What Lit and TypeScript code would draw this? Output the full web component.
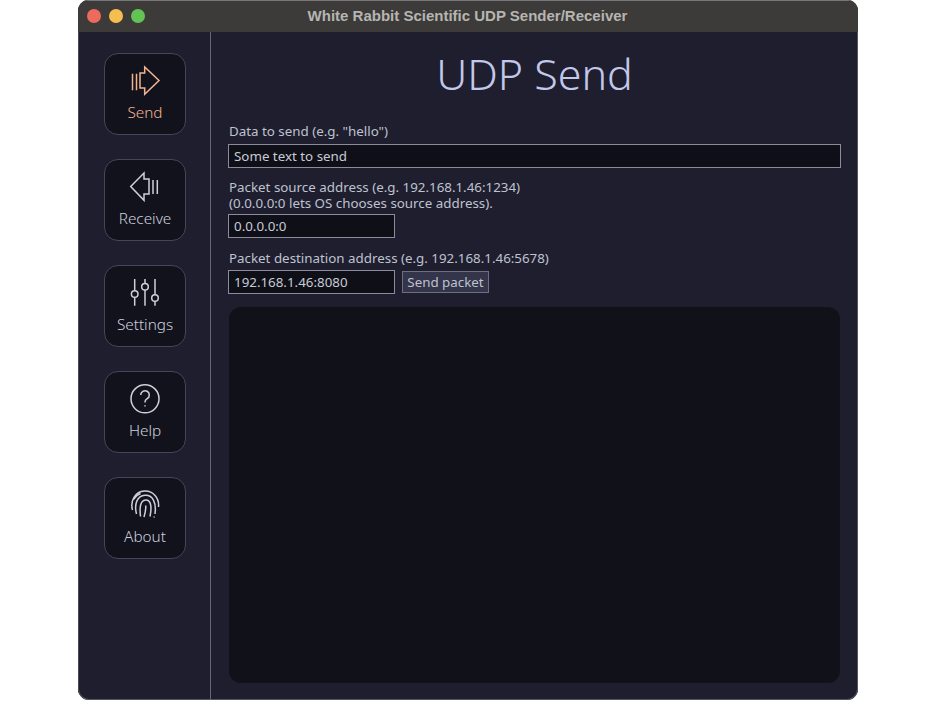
import { LitElement, html, css, svg } from "lit";
import { customElement } from "lit/decorators.js";

const icons: Record<string, unknown> = {
  send: svg`<path d="M5.500 10.700v16.600M9.500 10.700v16.600"/><path d="M13 10h4.700V4L32 17.500 17.700 31.300V25H13z"/>`,
  receive: svg`<path d="M26 11v14M30.300 11v14"/><path d="M22 10h-5V4L3.700 17.500 17 31.300V25h5z"/>`,
  settings: svg`<path d="M7.700 4v11.700M7.700 22.300v8.400M18 4v4.400M18 15v15.700M28 4v15.700M28 26.300v4.400"/><circle cx="7.700" cy="19" r="3.300"/><circle cx="18" cy="11.700" r="3.300"/><circle cx="28" cy="23" r="3.300"/>`,
  help: svg`<circle cx="18" cy="17.800" r="14"/><path d="M13.700 14a4.300 4.300 0 1 1 6.500 3.700c-1.400.9-2.200 1.800-2.200 3.400v.5"/><path d="M18 24.200v1.200"/>`,
  about: svg`<path d="M5.500 23C3 14 8 4.500 17.500 4 26 3.500 32.500 11 31.500 20"/><path d="M9.500 27C7 17 10 8.800 18 8.300 26 7.800 29.500 16 28 27"/><path d="M6.300 12.500C8 9.800 10.500 7.500 13.500 6.500"/><path d="M13.500 29.500C12.500 21 13 13.500 18.500 13 24 12.500 25 20 23 29.500"/><path d="M17 30C18.500 25 19 22 18.700 18.500"/><path d="M27 30.500l.3-1"/>`,
};

const NAV = [
  { id: "send", label: "Send", active: true },
  { id: "receive", label: "Receive" },
  { id: "settings", label: "Settings" },
  { id: "help", label: "Help" },
  { id: "about", label: "About" },
];

@customElement("app-root")
export class AppRoot extends LitElement {
  static styles = css`
    :host {
      display: block;
      width: 934px;
      height: 701px;
      background: #ffffff;
      font-family: "Noto Sans", "Open Sans", sans-serif;
    }
    .page {
      padding-left: 78px;
      width: 780px;
    }
    .window {
      width: 780px;
      height: 700px;
      border-radius: 11px;
      overflow: hidden;
      background: #1e1e2e;
      display: flex;
      flex-direction: column;
      box-shadow: inset 0 0 0 1px #55555f;
    }
    .titlebar {
      height: 32px;
      flex: none;
      background: #3c3b39;
      box-sizing: border-box;
      border-top: 1px solid #77767a;
      display: flex;
      align-items: center;
      padding: 0 0 2px 9px;
    }
    .lights { display: flex; gap: 8px; }
    .light { width: 14px; height: 14px; border-radius: 50%; }
    .red { background: #ed6a5e; }
    .yellow { background: #f5bf4f; }
    .green { background: #61c454; }
    .wintitle {
      flex: 1;
      text-align: center;
      margin-left: -68px;
      font: 700 15px "Liberation Sans", Arial, sans-serif;
      color: #b6b5b2;
    }
    .body { flex: 1; display: flex; min-height: 0; }
    .side {
      width: 130px;
      flex: none;
      border-right: 1px solid #666679;
      border-left: 1px solid #4a4a55;
      padding: 21px 0 0 1px;
      display: flex;
      flex-direction: column;
      align-items: center;
      gap: 24px;
    }
    .navbtn {
      width: 82px;
      height: 82px;
      box-sizing: border-box;
      border: 1px solid #46465a;
      border-radius: 14px;
      background: #12121d;
      display: flex;
      flex-direction: column;
      align-items: center;
      color: #cdd0dc;
      font-size: 15.300px;
      font-weight: 300;
      line-height: 20px;
    }
    .navbtn.active { color: #f2b48e; }
    .navbtn svg {
      margin-top: 9px;
      width: 36px;
      height: 36px;
      fill: none;
      stroke: currentColor;
      stroke-width: 1.500px;
    }
    .navbtn span { margin-top: 3px; }
    .main {
      flex: 1;
      min-width: 0;
      padding: 0 17px 17px 17px;
      display: flex;
      flex-direction: column;
      color: #bfc2cf;
      font-size: 13.350px;
      line-height: 16px;
    }
    h1 {
      margin: 12px 0 0;
      text-align: center;
      font-weight: 300;
      font-size: 43px;
      line-height: 60px;
      color: #c3c8eb;
    }
    label { display: block; margin-left: 1px; }
    .l1 { margin-top: 19px; }
    .l2 { margin-top: 11px; }
    .l3 { margin-top: 12px; }
    .field {
      height: 24px;
      box-sizing: border-box;
      border: 1px solid #8b8b9b;
      background: #0f0f18;
      color: #c8cad5;
      padding: 0 5px;
      line-height: 22px;
      white-space: nowrap;
    }
    .field.first { margin-top: 5px; }
    .field.short { width: 167px; margin-top: 3px; }
    .row { display: flex; align-items: center; gap: 7px; margin-top: 4px; }
    .row .field { margin-top: 0; }
    .btn {
      width: 87px;
      height: 22px;
      box-sizing: border-box;
      border: 1px solid #6e6e82;
      background: #34344a;
      line-height: 20px;
      text-align: center;
    }
    .log {
      flex: 1;
      margin: 13px 1px 0;
      border-radius: 12px;
      background: #11111a;
    }
  `;

  render() {
    return html`<div class="page">
      <div class="window">
        <div class="titlebar">
          <div class="lights">
            <div class="light red"></div>
            <div class="light yellow"></div>
            <div class="light green"></div>
          </div>
          <div class="wintitle">White Rabbit Scientific UDP Sender/Receiver</div>
        </div>
        <div class="body">
          <div class="side">
            ${NAV.map(
              (n) => html`<div class="navbtn ${n.active ? "active" : ""}">
                <svg viewBox="0 0 36 36">${icons[n.id]}</svg>
                <span>${n.label}</span>
              </div>`
            )}
          </div>
          <div class="main">
            <h1>UDP Send</h1>
            <label class="l1">Data to send (e.g. "hello")</label>
            <div class="field first">Some text to send</div>
            <label class="l2">Packet source address (e.g. 192.168.1.46:1234)<br />(0.0.0.0:0 lets OS chooses source address).</label>
            <div class="field short">0.0.0.0:0</div>
            <label class="l3">Packet destination address (e.g. 192.168.1.46:5678)</label>
            <div class="row">
              <div class="field short">192.168.1.46:8080</div>
              <div class="btn">Send packet</div>
            </div>
            <div class="log"></div>
          </div>
        </div>
      </div>
    </div>`;
  }
}
